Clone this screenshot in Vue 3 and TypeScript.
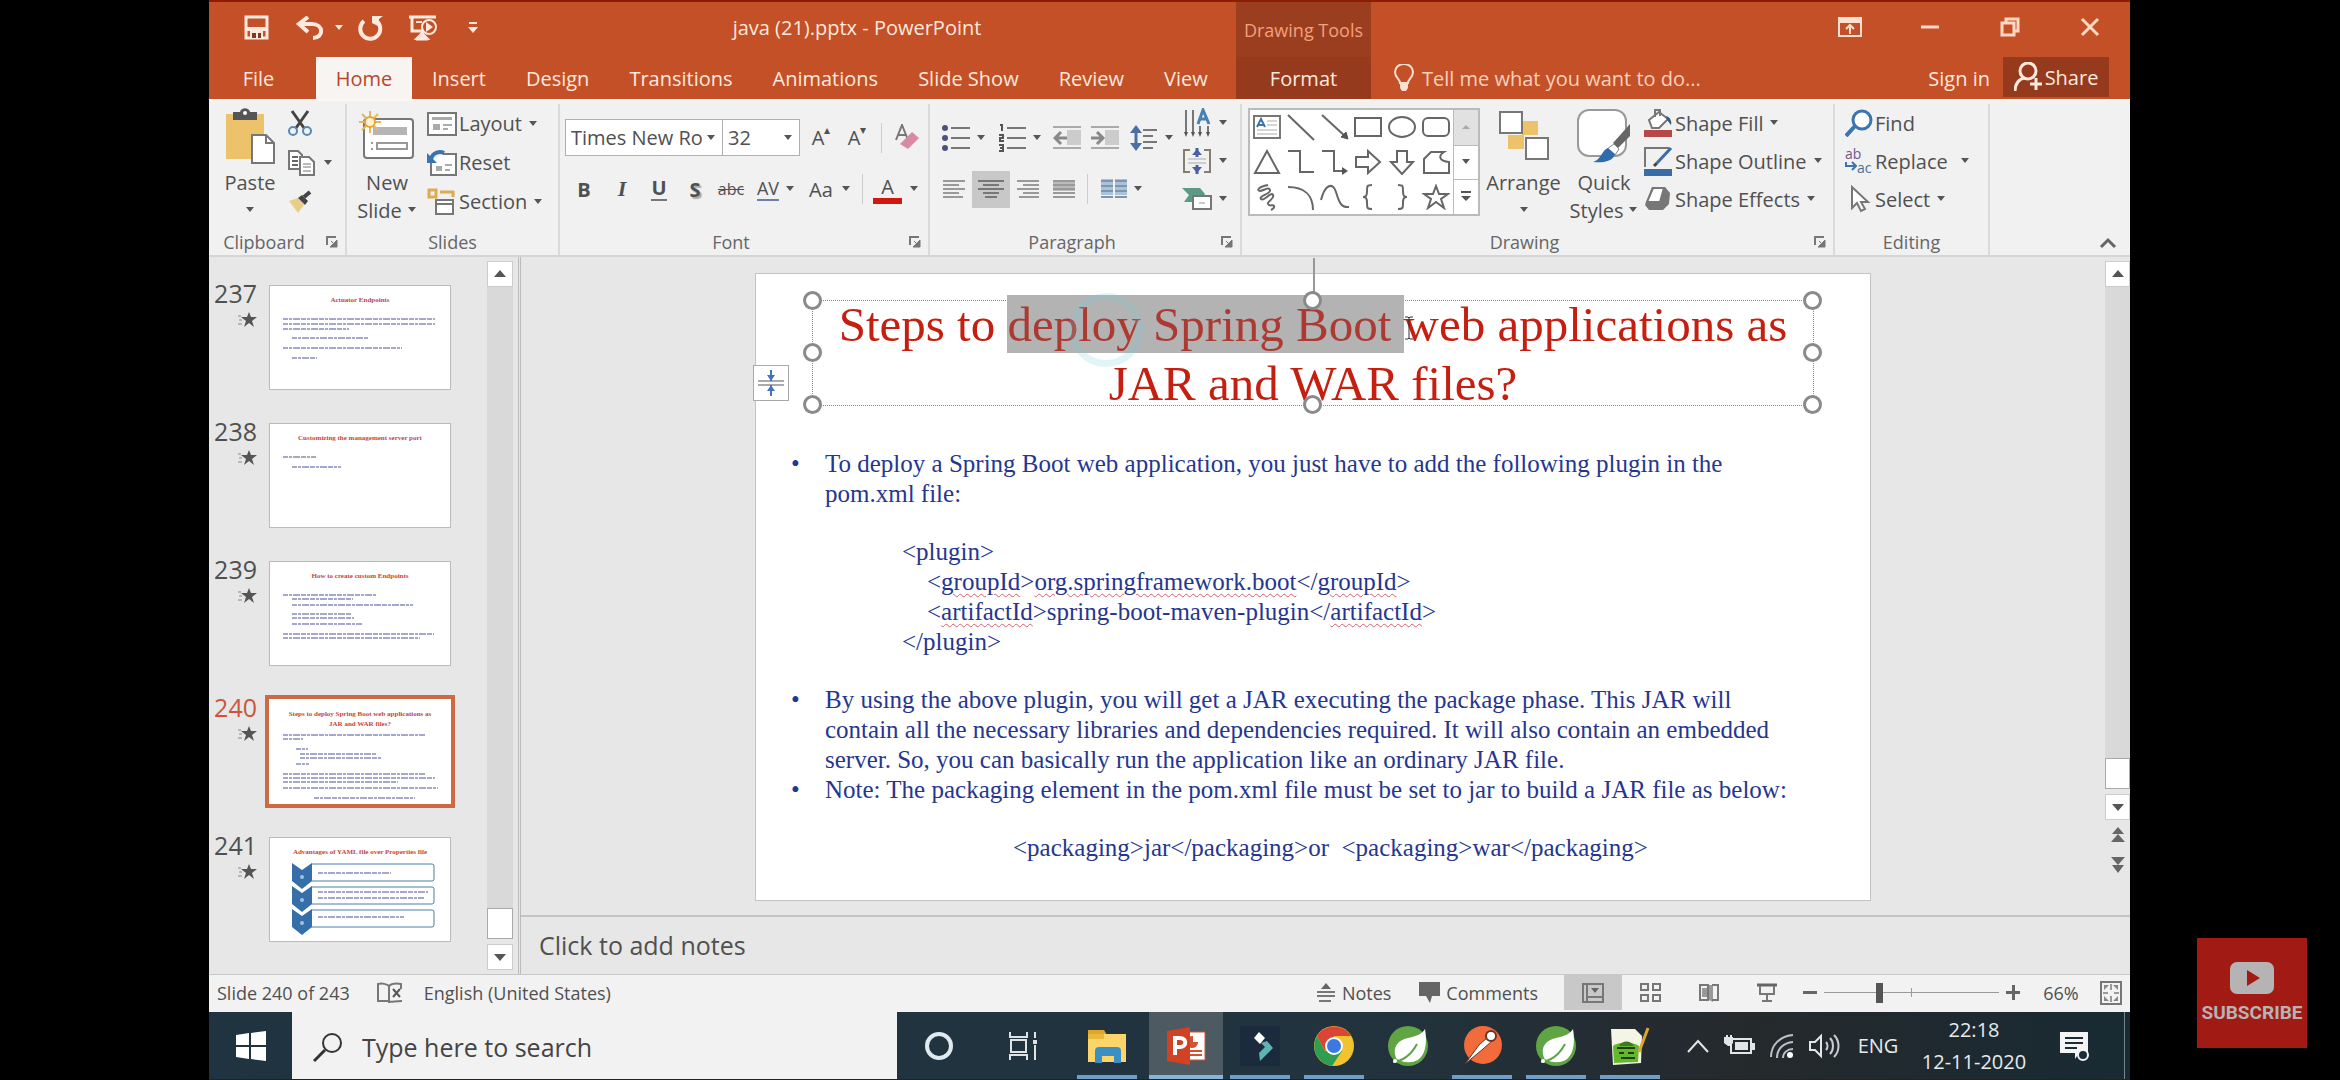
<script setup lang="ts">
import { h, ref } from 'vue'

interface Icon { w: number; h: number; b: string }

const g = 'fill="none" stroke="#666" stroke-width="2"'
const w = 'fill="none" stroke="#ffe9df" stroke-width="3"'

const leaf = `<circle cx="21" cy="21" r="20" fill="#5fa544"/><path d="M38 4c3 18-1 32-14 33-8 1-13-2-15-4-4-11 2-18 12-20 9-2 14-4 17-9z" fill="#fff"/><path d="M6 37c10-1 18-7 24-18" fill="none" stroke="#5fa544" stroke-width="2"/><circle cx="8" cy="36" r="2" fill="#fff"/>`

const icons: Record<string, Icon> = {
  caret: { w: 10, h: 6, b: '<path d="M1 0h8L5 5z" fill="#555"/>' },
  caretLight: { w: 10, h: 6, b: '<path d="M1 0h8L5 5z" fill="#ffe9df"/>' },
  save: { w: 25, h: 25, b: `<path d="M2 2h21v21H2z" ${w}/><path d="M2 12h21v4H2zM6 15h13v9H6z" fill="#ffe9df"/><path d="M8 18h4v5H8zM14 18h3v5h-3z" fill="#8a3418"/>` },
  undo: { w: 28, h: 24, b: `<path d="M4 8h12c12 0 12 14 1 14" fill="none" stroke="#ffe9df" stroke-width="4"/><path d="M12 1L3 8l9 8" fill="none" stroke="#ffe9df" stroke-width="4"/>` },
  redo: { w: 26, h: 26, b: `<path d="M17 5A10 10 0 1 1 6 6" fill="none" stroke="#ffe9df" stroke-width="4"/><path d="M14 1h11l-4 3-1 7-6-3z" fill="#ffe9df"/>` },
  show: { w: 30, h: 28, b: `<path d="M1 3h27" ${w}/><path d="M4 4v13h16M14 17v6M8 25h12" fill="none" stroke="#ffe9df" stroke-width="3"/><path d="M8 8h6M14 19l-6 6h12z" stroke="#ffe9df" stroke-width="2" fill="#ffe9df"/><circle cx="21" cy="13" r="7" fill="#c44f26" stroke="#ffe9df" stroke-width="2"/><path d="M18 8l7 5-7 5z" fill="#ffe9df"/>` },
  custom: { w: 10, h: 12, b: '<path d="M1 1h8" stroke="#ffe9df" stroke-width="2"/><path d="M0 5h10L5 11z" fill="#ffe9df"/>' },
  ribbonOpts: { w: 24, h: 20, b: '<path d="M1 1h22v18H1z" fill="none" stroke="#ffe0d0" stroke-width="2"/><path d="M1 1h22v5H1z" fill="#ffe0d0"/><path d="M12 17V8M8 12l4-4 4 4" fill="none" stroke="#ffe0d0" stroke-width="2"/>' },
  min: { w: 20, h: 20, b: '<path d="M1 10h18" stroke="#ffd9c6" stroke-width="3"/>' },
  restore: { w: 20, h: 20, b: '<path d="M2 6h12v12H2zM6 5V2h12v12h-3" fill="none" stroke="#ffd9c6" stroke-width="3"/>' },
  close: { w: 20, h: 20, b: '<path d="M2 2l16 16M18 2L2 18" stroke="#ffd9c6" stroke-width="3"/>' },
  bulb: { w: 20, h: 28, b: '<path d="M6 19c0-4-5-5-5-11a9 8 0 0 1 18 0c0 6-5 7-5 11z" fill="none" stroke="#ffe0d0" stroke-width="2"/><path d="M6 20h8v4l-2 3H8l-2-3z" fill="#ffe0d0"/>' },
  person: { w: 28, h: 30, b: '<circle cx="14" cy="9" r="8" fill="none" stroke="#ffe9df" stroke-width="3"/><path d="M1 29c0-7 4-12 9-13M22 16v12M16 22h12" fill="none" stroke="#ffe9df" stroke-width="3"/>' },
  paste: { w: 50, h: 56, b: '<path d="M1 6h38v45H1z" fill="#ecc26b"/><path d="M8 4h7c1-5 9-5 10 0h7v8H8z" fill="#555"/><circle cx="20" cy="5" r="2" fill="#fff"/><path d="M27 27h14l8 8v20H27z" fill="#fff" stroke="#777" stroke-width="2"/><path d="M41 27v8h8" fill="none" stroke="#777" stroke-width="2"/>' },
  cut: { w: 26, h: 28, b: '<path d="M5 1l12 17M21 1L9 18" stroke="#444" stroke-width="3"/><circle cx="6" cy="21" r="4" fill="none" stroke="#5b87b3" stroke-width="2"/><circle cx="20" cy="21" r="4" fill="none" stroke="#5b87b3" stroke-width="2"/>' },
  copy: { w: 28, h: 28, b: `<path d="M2 2h9l4 4v14H2z" fill="#fff" stroke="#777" stroke-width="2"/><path d="M5 8h6M5 12h6M5 16h6" ${g}/><path d="M13 8h9l5 5v13H13z" fill="#fff" stroke="#777" stroke-width="2"/><path d="M16 15h8M16 18h8M16 22h8" stroke="#777" fill="none"/>` },
  brush: { w: 26, h: 24, b: '<path d="M2 11l9-3 6 7-6 8z" fill="#e8cf87"/><path d="M11 8l7 7 3-4-6-6z" fill="#444"/><path d="M17 7l6-5" stroke="#444" stroke-width="4"/>' },
  newSlide: { w: 56, h: 50, b: '<rect x="5" y="8" width="49" height="39" rx="3" fill="#fff" stroke="#777" stroke-width="2"/><path d="M14 16h34v8H14z" fill="#b5b5b5"/><path d="M18 32h30v6H18zM12 32h2M12 38h2" fill="none" stroke="#999" stroke-width="2"/><path d="M11 0v22M0 11h22M3 3l16 16M19 3L3 19" stroke="#eab65a" stroke-width="2"/><circle cx="11" cy="11" r="5" fill="#fff4d0" stroke="#e3a53e" stroke-width="2"/>' },
  layout: { w: 30, h: 24, b: '<path d="M1 1h28v22H1z" fill="#fff" stroke="#777" stroke-width="2"/><path d="M5 5h20v3H5zM6 12h7v6H6zM16 12h9v2h-9zM16 16h5v2h-5z" fill="#aaa"/>' },
  reset: { w: 30, h: 26, b: '<path d="M4 12v13h25V4H16" fill="#fff" stroke="#777" stroke-width="2"/><path d="M9 16h6v5H9zM18 14h7v2h-7zM18 19h5v2h-5z" fill="#aaa"/><path d="M4 9c2-7 9-8 13-6" fill="none" stroke="#3b74ae" stroke-width="4"/><path d="M0 3v10h10z" fill="#3b74ae"/>' },
  section: { w: 30, h: 28, b: '<path d="M2 2h7v7H2zM13 4h14M26 3v6" fill="none" stroke="#e0aa50" stroke-width="3"/><path d="M9 12h17v14H9z" fill="#fff" stroke="#777" stroke-width="2"/><path d="M9 16h17" stroke="#777" stroke-width="2"/>' },
  launcher: { w: 12, h: 12, b: '<path d="M1 9V1h9" fill="none" stroke="#777" stroke-width="2"/><path d="M5 5l3 3M11 4v7H4z" stroke="#777" fill="#777"/>' },
  eraser: { w: 24, h: 28, b: '<path d="M1 16L7 1l6 15M3 11h8" fill="none" stroke="#777" stroke-width="2"/><path d="M5 20l12-12 7 6-11 11z" fill="#d98aa2"/>' },
  bullets: { w: 28, h: 28, b: '<path d="M9 4h19M9 14h19M9 24h19" stroke="#777" stroke-width="2"/><circle cx="3" cy="4" r="3" fill="#4b5478"/><circle cx="3" cy="14" r="3" fill="#4b5478"/><circle cx="3" cy="24" r="3" fill="#4b5478"/>' },
  numbers: { w: 28, h: 28, b: '<path d="M9 4h19M9 14h19M9 24h19" stroke="#777" stroke-width="2"/><path d="M2 1h2v6M1 11h4v3H2v3h4M1 21h4v6H1M2 24h3" fill="none" stroke="#555" stroke-width="2"/>' },
  outdent: { w: 28, h: 26, b: '<path d="M0 2h28M0 23h28" stroke="#aaa" stroke-width="2"/><path d="M14 5h14v15H14z" fill="#ccc"/><path d="M14 13H3M8 7l-6 6 6 6" fill="none" stroke="#888" stroke-width="3"/>' },
  indent: { w: 28, h: 26, b: '<path d="M0 2h28M0 23h28" stroke="#aaa" stroke-width="2"/><path d="M14 5h14v15H14z" fill="#ccc"/><path d="M0 13h11M6 7l6 6-6 6" fill="none" stroke="#888" stroke-width="3"/>' },
  spacing: { w: 28, h: 28, b: '<path d="M6 4v20" stroke="#4a6fa5" stroke-width="3"/><path d="M0 9l6-8 6 8zM0 19l6 8 6-8z" fill="#4a6fa5"/><path d="M13 6h14M13 12h10M13 18h14M13 24h10" stroke="#777" stroke-width="2"/>' },
  textDir: { w: 30, h: 30, b: '<path d="M4 2v24M11 2v24M18 18v8M26 18v8" stroke="#777" stroke-width="2"/><path d="M2 24h4l-2 5zM9 24h4l-2 5zM16 24h4l-2 5zM24 24h4l-2 5z" fill="#555"/><path d="M16 16L21 2l6 14M17 11h8" fill="none" stroke="#4682b4" stroke-width="3"/>' },
  alignText: { w: 30, h: 26, b: '<path d="M8 2H2v22h6M22 2h6v22h-6" fill="none" stroke="#857e6c" stroke-width="2"/><path d="M6 11h18M6 15h18" stroke="#aaa"/><path d="M15 0v9M15 17v9" stroke="#4a5fa5" stroke-width="3"/><path d="M10 7l5-6 5 6zM10 19l5 6 5-6z" fill="#4a5fa5"/>' },
  smartArt: { w: 30, h: 24, b: '<path d="M0 1h18l5 6-5 8H2l5-7z" fill="#5b9a87"/><path d="M11 9h18v13H11z" fill="#fff" stroke="#777" stroke-width="2"/><path d="M17 16h6" stroke="#999"/>' },
  left: { w: 22, h: 20, b: '<path d="M0 2h22M0 6h16M0 10h22M0 14h16M0 18h20" stroke="#999" stroke-width="2"/>' },
  center: { w: 26, h: 20, b: '<path d="M0 2h26M5 6h16M0 10h26M5 14h16M7 18h12" stroke="#777" stroke-width="2"/>' },
  right: { w: 22, h: 20, b: '<path d="M0 2h22M6 6h16M0 10h22M6 14h16M2 18h20" stroke="#999" stroke-width="2"/>' },
  justify: { w: 22, h: 20, b: '<path d="M0 1h22v11H0z" fill="#bbb"/><path d="M0 2h22M0 6h22M0 10h22M0 14h22M0 18h22" stroke="#999" stroke-width="2"/>' },
  columns: { w: 26, h: 20, b: '<path d="M0 0h12v16H0zM14 0h12v16H14z" fill="#a9c3dd"/><path d="M0 2h12M0 7h12M0 12h12M0 18h12M14 2h12M14 7h12M14 12h12M14 18h12" stroke="#8195aa" stroke-width="2"/>' },
  sText: { w: 28, h: 24, b: '<path d="M1 1h26v22H1z" fill="#fff" stroke="#777" stroke-width="2"/><path d="M4 12l4-8 4 8M5 10h6" fill="none" stroke="#3b74ae" stroke-width="2"/><path d="M14 6h10M14 10h10M4 15h20M4 19h20" stroke="#aaa"/>' },
  sLine: { w: 28, h: 28, b: `<path d="M1 2l26 25" ${g}/>` },
  sArrow: { w: 28, h: 28, b: `<path d="M1 2l24 22" ${g}/><path d="M27 26l-7-2 5-5z" fill="#555" stroke="#555"/>` },
  sRect: { w: 28, h: 24, b: `<path d="M1 3h26v18H1z" ${g}/>` },
  sOval: { w: 28, h: 24, b: `<ellipse cx="14" cy="12" rx="13" ry="10" ${g}/>` },
  sRound: { w: 28, h: 24, b: `<rect x="1" y="3" width="26" height="18" rx="5" ${g}/>` },
  sTri: { w: 28, h: 26, b: `<path d="M14 2l12 22H2z" ${g}/>` },
  sElbow: { w: 28, h: 26, b: `<path d="M1 2h12v21h14" ${g}/>` },
  sElbowA: { w: 28, h: 26, b: `<path d="M1 2h12v20h10" ${g}/><path d="M21 18l6 4-6 4z" fill="#555"/>` },
  sRight: { w: 28, h: 26, b: `<path d="M2 8h12V2l12 11-12 11v-6H2z" ${g}/>` },
  sDown: { w: 28, h: 26, b: `<path d="M9 2h10v11h6L14 25 3 13h6z" ${g}/>` },
  sFree: { w: 28, h: 26, b: `<path d="M2 24V10l7-7h13c-6 4-5 9 5 10v11z" ${g}/>` },
  sScrib: { w: 28, h: 28, b: `<path d="M15 2C4 4 4 8 7 8s9-5 10-1-12 6-9 9 10-8 12-4-6 6-5 9 5 0 6 2-3 4-3 4" ${g}/>` },
  sArc: { w: 28, h: 26, b: `<path d="M1 3c16 0 25 8 25 23" ${g}/>` },
  sCurve: { w: 30, h: 26, b: `<path d="M1 16C5 0 13-2 16 8s5 16 13 15" ${g}/>` },
  sLB: { w: 28, h: 26, b: `<path d="M18 1c-5 0-5 1-5 6s-1 6-4 6c3 0 4 1 4 6s0 6 5 6" ${g}/>` },
  sRB: { w: 28, h: 26, b: `<path d="M10 1c5 0 5 1 5 6s1 6 4 6c-3 0-4 1-4 6s0 6-5 6" ${g}/>` },
  sStar: { w: 28, h: 26, b: `<path d="M14 2l3 8h9l-7 5 3 9-8-6-8 6 3-9-7-5h9z" ${g}/>` },
  more: { w: 10, h: 12, b: '<path d="M0 1h10" stroke="#555" stroke-width="2"/><path d="M0 5h10L5 10z" fill="#555"/>' },
  dash: { w: 10, h: 6, b: '<path d="M1 5h8L5 1z" fill="#aaa"/>' },
  arrange: { w: 52, h: 52, b: '<path d="M24 11h16v14H24zM10 25h16v14H10z" fill="#ecc26b"/><path d="M2 2h22v21H2zM28 28h22v21H28z" fill="#fff" stroke="#777" stroke-width="2"/>' },
  quick: { w: 56, h: 56, b: '<rect x="2" y="2" width="48" height="46" rx="11" fill="#fff" stroke="#999" stroke-width="2"/><path d="M54 16v12L42 40l-5-5z" fill="#666"/><path d="M31 41l7-5 5 5-4 6z" fill="#fff" stroke="#888"/><path d="M17 54c9-3 8-11 15-14l7 6c-2 8-13 9-22 8z" fill="#2f6cab"/>' },
  fill: { w: 30, h: 30, b: '<path d="M1 22h28v7H1z" fill="#b8474a"/><path d="M6 12L16 4l9 7-9 9H9z" fill="#fff" stroke="#777" stroke-width="2"/><path d="M12 9V2h5v6" fill="none" stroke="#777" stroke-width="2"/><path d="M23 8c4 1 6 5 5 9l-4-5z" fill="#2e5c7c"/>' },
  outline: { w: 30, h: 30, b: '<path d="M1 23h28v7H1z" fill="#3a6ca6"/><path d="M26 2H2v19" fill="none" stroke="#777" stroke-width="2"/><path d="M28 2L14 17" stroke="#3a6ca6" stroke-width="3"/><path d="M14 17l-3 3" stroke="#444" stroke-width="3"/>' },
  effects: { w: 30, h: 28, b: '<path d="M9 2h13l5 6-1 11-6 6H6l-4-5z" fill="#777"/><path d="M10 3h11l-4 14H4z" fill="#fff" stroke="#777" stroke-width="2"/>' },
  find: { w: 28, h: 28, b: '<circle cx="17" cy="11" r="9" fill="#fff" stroke="#3b74ae" stroke-width="3"/><path d="M10 17L1 27" stroke="#3b74ae" stroke-width="4"/>' },
  select: { w: 28, h: 28, b: '<path d="M7 2v21l5-5 4 8 4-2-4-7h7z" fill="#fff" stroke="#777" stroke-width="2"/>' },
  replArrow: { w: 12, h: 10, b: '<path d="M1 1v4h9M7 1l4 4-4 4" fill="none" stroke="#3b74ae" stroke-width="2"/>' },
  collapse: { w: 18, h: 12, b: '<path d="M2 10l7-7 7 7" fill="none" stroke="#666" stroke-width="3"/>' },
  up: { w: 14, h: 8, b: '<path d="M7 0l6 7H1z" fill="#555"/>' },
  down: { w: 14, h: 8, b: '<path d="M7 8L1 1h12z" fill="#555"/>' },
  dblUp: { w: 14, h: 16, b: '<path d="M7 0l6 7H1zM7 7l7 8H0z" fill="#666"/>' },
  dblDown: { w: 14, h: 16, b: '<path d="M7 8L0 0h14zM7 16L1 8h12z" fill="#666"/>' },
  anim: { w: 20, h: 16, b: '<path d="M12 0l2 5h6l-5 4 2 6-5-4-5 4 2-6-5-4h6z" fill="#555"/><path d="M1 4h3M2 8h3M1 12h4" stroke="#888"/>' },
  cursor: { w: 10, h: 24, b: '<path d="M1 1h3l1 1 1-1h3M5 2v20M1 23h3l1-1 1 1h3" fill="none" stroke="#333"/>' },
  fit: { w: 28, h: 28, b: '<path d="M1 12h26M1 16h26" stroke="#aaa" stroke-width="2"/><path d="M14 1v11M14 16v11" stroke="#4472c4" stroke-width="2"/><path d="M10 6h8l-4 6zM10 22h8l-4-6z" fill="#4472c4"/>' },
  spell: { w: 28, h: 22, b: '<path d="M12 19H2V2c4-1 9 0 11 2 2-2 6-3 12-2v5M12 19c4 2 5 0 14 0M13 4v17" fill="none" stroke="#777" stroke-width="2"/><path d="M17 7l7 8M24 7l-7 8" stroke="#555" stroke-width="2"/>' },
  notes: { w: 20, h: 20, b: '<path d="M10 0l5 6H5z" fill="#666"/><path d="M1 9h18M1 13h18M3 18h12" stroke="#777" stroke-width="2"/>' },
  comment: { w: 22, h: 22, b: '<path d="M0 0h21v14H13l-2 7-4-7H0z" fill="#666"/>' },
  normal: { w: 22, h: 20, b: '<path d="M1 1h20v18H1zM5 1v18M5 14h16" fill="none" stroke="#777" stroke-width="2"/><path d="M9 5h8l-4 5z" fill="#666"/>' },
  sorter: { w: 22, h: 20, b: '<path d="M1 1h7v6H1zM13 1h7v6h-7zM1 12h7v6H1zM13 12h7v6h-7z" fill="none" stroke="#777" stroke-width="2"/>' },
  reading: { w: 20, h: 20, b: '<path d="M1 2h8v15H1z" fill="none" stroke="#777" stroke-width="2"/><path d="M3 5h5v9H3zM10 2h4v17l-4-2z" fill="#999"/><path d="M13 2h6v15h-6" fill="none" stroke="#777" stroke-width="2"/>' },
  slideshow: { w: 20, h: 20, b: '<path d="M0 2h20" stroke="#666" stroke-width="3"/><path d="M3 3v8h14V3M10 11v6M5 18h10" fill="none" stroke="#777" stroke-width="2"/>' },
  fitWin: { w: 22, h: 24, b: '<path d="M1 1h20v22H1z" fill="none" stroke="#777" stroke-width="2"/><path d="M11 3v6M11 15v6M3 12h5M14 12h5" stroke="#999" stroke-width="2"/><path d="M4 4h5l-5 5zM18 4h-5l5 5zM4 20h5l-5-5zM18 20h-5l5-5z" fill="#888"/>' },
  windows: { w: 32, h: 32, b: '<path d="M1 5l13-2v12H1zM16 3l15-2v14H16zM1 17h13v12L1 27zM16 17h15v14l-15-2z" fill="#fff"/>' },
  search: { w: 30, h: 30, b: '<circle cx="19" cy="11" r="9" fill="none" stroke="#333" stroke-width="2"/><path d="M12 18L1 29" stroke="#333" stroke-width="3"/>' },
  cortana: { w: 30, h: 30, b: '<circle cx="15" cy="15" r="12" fill="none" stroke="#dfe9f0" stroke-width="4"/>' },
  taskview: { w: 30, h: 30, b: '<path d="M2 1v5h17V1M2 29v-5h17v5M3 9h15v12H3z" fill="none" stroke="#dfe3e6" stroke-width="2"/><path d="M27 1v6M27 14v15" stroke="#dfe3e6" stroke-width="2"/><path d="M25 9h4v4h-4z" fill="#dfe3e6"/>' },
  folder: { w: 40, h: 34, b: '<path d="M1 1h16l3 5H1z" fill="#e0a526"/><path d="M1 5h38v28H1z" fill="#fcd56a"/><path d="M1 5h16v5H1z" fill="#e9b93c"/><path d="M8 34V22q0-4 4-4h18q4 0 4 4v12h-7v-7H15v7z" fill="#3c8fc4"/>' },
  ppt: { w: 40, h: 38, b: '<path d="M18 5h21v28H18z" fill="#fff" stroke="#d35230"/><path d="M26 10a5 5 0 1 0 5 6h-5zM24 24h12M24 28h12" fill="#d35230" stroke="#d35230" stroke-width="2"/><path d="M1 4l23-4v38L1 34z" fill="#d04223"/><path d="M9 28V11h5c7 0 7 9 0 9h-4" fill="none" stroke="#fff" stroke-width="4"/>' },
  filmora: { w: 40, h: 40, b: '<path d="M0 0h40v40H0z" fill="#1b2a3d"/><path d="M19 6l6 6-5 6-6-6z" fill="#fff"/><path d="M27 15l6 7-13 13-1-8 6-6-4-4z" fill="#5fb3b5"/>' },
  chrome: { w: 42, h: 42, b: '<circle cx="21" cy="21" r="20" fill="#f2c330"/><path d="M4 11a20 20 0 0 1 34 0H21L12 26z" fill="#dc4536"/><path d="M4 11a20 20 0 0 0 15 30l10-15H12z" fill="#2f9e52"/><path d="M12 26h17l-8 5z" fill="#2f9e52"/><circle cx="21" cy="21" r="9" fill="#fff"/><circle cx="21" cy="21" r="7" fill="#3b78e0"/>' },
  spring: { w: 42, h: 42, b: leaf },
  postman: { w: 42, h: 42, b: '<circle cx="22" cy="20" r="19" fill="#f26b3a"/><path d="M4 39l14-19 9-8 4 4-9 8z" fill="#fff" stroke="#6b3322"/><circle cx="30" cy="11" r="5" fill="#fff" stroke="#6b3322" stroke-width="2"/>' },
  npp: { w: 42, h: 40, b: '<path d="M2 3h24l7 7-1 27-28 2z" fill="#f5f5e6"/><path d="M4 20c8-5 20-4 26 0l-1 16-24 1z" fill="#63b82c"/><path d="M10 20c3-6 12-6 15 0z" fill="#3d7a1e"/><path d="M8 22h18M10 27h5M19 27h6M12 32h14" stroke="#223a18" stroke-width="2"/><path d="M39 2L30 26" stroke="#e0a72e" stroke-width="3"/>' },
  chevUp: { w: 24, h: 16, b: '<path d="M2 14L12 3l10 11" fill="none" stroke="#e3e6e8" stroke-width="2"/>' },
  battery: { w: 32, h: 22, b: '<path d="M7 4h20v14H7z" fill="none" stroke="#e3e6e8" stroke-width="2"/><path d="M11 7h13v8H11zM28 8h3v7h-3zM0 2h9v6l-3 3H4L0 8z" fill="#e3e6e8"/><path d="M3 0v3M7 0v3" stroke="#e3e6e8" stroke-width="2"/>' },
  wifi: { w: 26, h: 26, b: '<path d="M2 24C2 12 11 3 24 2M8 25c0-9 6-15 16-16M14 25c0-5 4-9 10-9" fill="none" stroke="#b9c1c7" stroke-width="2"/><circle cx="21" cy="22" r="3" fill="#fff"/>' },
  sound: { w: 32, h: 26, b: '<path d="M2 9h5l6-6v20l-6-6H2z" fill="none" stroke="#e3e6e8" stroke-width="2"/><path d="M18 9c2 2 2 6 0 8M22 5c4 4 4 12 0 16M26 2c6 6 6 16 0 22" fill="none" stroke="#c9ced2" stroke-width="2"/>' },
  notif: { w: 32, h: 30, b: '<path d="M1 1h28v21h-9l-4 6v-6H1z" fill="#f2f4f5"/><path d="M6 7h18M6 12h18M6 17h12" stroke="#1c2a33" stroke-width="2"/><circle cx="24" cy="24" r="5" fill="#1c2a33" stroke="#f2f4f5" stroke-width="2"/>' },
  youtube: { w: 46, h: 32, b: '<rect x="1" y="0" width="44" height="32" rx="7" fill="#b5b3b3"/><path d="M18 8l13 8-13 8z" fill="#a11a13"/>' },
}

const Ico = (p: { n: string }) => {
  const i = icons[p.n]
  return h('svg', { class: 'ico', width: i.w, height: i.h, viewBox: `0 0 ${i.w} ${i.h}`, innerHTML: i.b, 'aria-hidden': 'true' })
}
Ico.props = ['n']

const tabs = ['Insert', 'Design', 'Transitions', 'Animations', 'Slide Show', 'Review', 'View']
const shapes = ['sText', 'sLine', 'sArrow', 'sRect', 'sOval', 'sRound', 'sTri', 'sElbow', 'sElbowA', 'sRight', 'sDown', 'sFree', 'sScrib', 'sArc', 'sCurve', 'sLB', 'sRB', 'sStar']

interface Thumb { no: number; title: string[]; lines: number[][]; art?: boolean }
const thumbs: Thumb[] = [
  { no: 237, title: ['Actuator Endpoints'], lines: [[13, 165, 33], [13, 165, 38], [13, 79, 43], [22, 98, 52], [13, 132, 62], [22, 47, 72]] },
  { no: 238, title: ['Customizing the management server port'], lines: [[13, 46, 33], [22, 71, 43]] },
  { no: 239, title: ['How to create custom Endpoints'], lines: [[13, 106, 33], [22, 83, 37], [22, 143, 43], [22, 82, 52], [22, 84, 56], [22, 92, 62], [13, 164, 72], [13, 150, 76]] },
  { no: 240, title: ['Steps to deploy Spring Boot web applications as', 'JAR and WAR files?'], lines: [[13, 155, 35], [13, 33, 39], [26, 38, 49], [30, 106, 54], [30, 111, 58], [26, 39, 64], [13, 155, 74], [13, 165, 78], [13, 128, 82], [13, 168, 88], [44, 145, 98]] },
  { no: 241, title: ['Advantages of YAML file over Properties file'], lines: [[48, 121, 35], [48, 158, 54], [48, 154, 60], [48, 134, 79]], art: true },
]
const current = 240

const apps = [
  { n: 'ppt', open: true, active: true, label: 'PowerPoint' },
  { n: 'filmora', open: true, label: 'Filmora' },
  { n: 'chrome', open: true, label: 'Chrome' },
  { n: 'spring', open: false, label: 'Spring Tool Suite' },
  { n: 'postman', open: true, label: 'Postman' },
  { n: 'spring', open: true, label: 'Spring Tool Suite workspace' },
  { n: 'npp', open: true, label: 'Notepad++' },
]
const tray = ['chevUp', 'battery', 'wifi', 'sound']

const fontName = ref('Times New Roman')
const fontSize = ref('32')
const zoom = ref(31)
const query = ref('')
</script>

<template>
  <div class="screen">
    <div class="app">
      <header class="head">
        <div class="titlebar">
          <button aria-label="Save" class="q1"><Ico n="save" /></button>
          <button aria-label="Undo" class="q2"><Ico n="undo" /><Ico n="caretLight" /></button>
          <button aria-label="Repeat" class="q3"><Ico n="redo" /></button>
          <button aria-label="Start from beginning" class="q4"><Ico n="show" /></button>
          <button aria-label="Customize toolbar"><Ico n="custom" /></button>
          <h1>java (21).pptx - PowerPoint</h1>
        </div>
        <div class="tools">Drawing Tools</div>
        <div class="winbtns">
          <button aria-label="Ribbon display options"><Ico n="ribbonOpts" /></button>
          <button aria-label="Minimize"><Ico n="min" /></button>
          <button aria-label="Restore"><Ico n="restore" /></button>
          <button aria-label="Close"><Ico n="close" /></button>
        </div>
        <nav class="tabs">
          <button class="file">File</button>
          <button class="home">Home</button>
          <button v-for="t in tabs" :key="t">{{ t }}</button>
        </nav>
        <button class="format">Format</button>
        <div class="tell">
          <button class="tellme"><Ico n="bulb" />Tell me what you want to do...</button>
          <a href="#" class="signin">Sign in</a>
          <button class="share"><Ico n="person" />Share</button>
        </div>
      </header>

      <div class="ribbon">
        <section class="group clip">
          <div class="body">
            <button class="big paste"><span class="pic"><Ico n="paste" /></span><span>Paste</span><span><Ico n="caret" /></span></button>
            <div class="rows wide">
              <button aria-label="Cut"><Ico n="cut" /></button>
              <button aria-label="Copy" class="gap12"><Ico n="copy" /><Ico n="caret" /></button>
              <button aria-label="Format Painter"><Ico n="brush" /></button>
            </div>
          </div>
          <footer><span>Clipboard</span><button aria-label="Clipboard options"><Ico n="launcher" /></button></footer>
        </section>

        <section class="group slides">
          <div class="body">
            <button class="big newslide"><span class="pic"><Ico n="newSlide" /></span><span>New</span><span>Slide <Ico n="caret" /></span></button>
            <div class="rows wide">
              <button><Ico n="layout" />Layout <Ico n="caret" class="car" /></button>
              <button><Ico n="reset" />Reset</button>
              <button><Ico n="section" />Section <Ico n="caret" class="car" /></button>
            </div>
          </div>
          <footer><span>Slides</span></footer>
        </section>

        <section class="group font">
          <div class="body col">
            <div class="line first">
              <div class="combo name"><input v-model="fontName" aria-label="Font name"><Ico n="caret" /></div>
              <div class="combo size"><input v-model="fontSize" aria-label="Font size"><Ico n="caret" /></div>
              <button class="grow" aria-label="Increase font size">A<sup>▴</sup></button>
              <button class="grow" aria-label="Decrease font size">A<sup>▾</sup></button>
              <i class="sep"></i>
              <button aria-label="Clear formatting"><Ico n="eraser" /></button>
            </div>
            <div class="line fmt">
              <button class="c38"><b>B</b></button>
              <button class="c38 ital"><b>I</b></button>
              <button class="c36"><b class="und">U</b></button>
              <button class="c36"><b class="shadow">S</b></button>
              <button class="strike">abc</button>
              <button class="av"><span>AV</span><Ico n="caret" /></button>
              <button class="aa">Aa<Ico n="caret" /></button>
              <i class="sep"></i>
              <button class="color"><span>A</span><Ico n="caret" /></button>
            </div>
          </div>
          <footer><span>Font</span><button aria-label="Font options"><Ico n="launcher" /></button></footer>
        </section>

        <section class="group para">
          <div class="body">
            <div class="pcol">
              <div class="line first">
                <button class="c56" aria-label="Bullets"><Ico n="bullets" /><Ico n="caret" /></button>
                <button class="c56" aria-label="Numbering"><Ico n="numbers" /><Ico n="caret" /></button>
                <button class="c38" aria-label="Decrease indent"><Ico n="outdent" /></button>
                <button class="c38" aria-label="Increase indent"><Ico n="indent" /></button>
                <button class="c56" aria-label="Line spacing"><Ico n="spacing" /><Ico n="caret" /></button>
              </div>
              <div class="line al">
                <button class="c36" aria-label="Align left"><Ico n="left" /></button>
                <button class="c38 on" aria-label="Center"><Ico n="center" /></button>
                <button class="c36" aria-label="Align right"><Ico n="right" /></button>
                <button class="c36" aria-label="Justify"><Ico n="justify" /></button>
                <i class="sep"></i>
                <button class="c56" aria-label="Columns"><Ico n="columns" /><Ico n="caret" /></button>
              </div>
            </div>
            <div class="rows">
              <button aria-label="Text direction"><Ico n="textDir" /><Ico n="caret" class="car" /></button>
              <button aria-label="Align text"><Ico n="alignText" /><Ico n="caret" class="car" /></button>
              <button aria-label="Convert to SmartArt"><Ico n="smartArt" /><Ico n="caret" class="car" /></button>
            </div>
          </div>
          <footer><span>Paragraph</span><button aria-label="Paragraph options"><Ico n="launcher" /></button></footer>
        </section>

        <section class="group draw">
          <div class="body">
            <div class="gallery">
              <div class="shapes">
                <button v-for="s in shapes" :key="s" :aria-label="s.slice(1)"><Ico :n="s" /></button>
              </div>
              <div class="gscroll">
                <button aria-label="Previous shapes" disabled><Ico n="dash" /></button>
                <button aria-label="Next shapes"><Ico n="caret" /></button>
                <button aria-label="More shapes"><Ico n="more" /></button>
              </div>
            </div>
            <button class="big arrange"><span class="pic"><Ico n="arrange" /></span><span>Arrange</span><span><Ico n="caret" /></span></button>
            <button class="big quick"><span class="pic"><Ico n="quick" /></span><span>Quick</span><span>Styles <Ico n="caret" /></span></button>
            <div class="rows">
              <button><Ico n="fill" />Shape Fill <Ico n="caret" class="car" /></button>
              <button><Ico n="outline" />Shape Outline <Ico n="caret" class="car" /></button>
              <button><Ico n="effects" />Shape Effects <Ico n="caret" class="car" /></button>
            </div>
          </div>
          <footer><span>Drawing</span><button aria-label="Drawing options"><Ico n="launcher" /></button></footer>
        </section>

        <section class="group edit">
          <div class="body">
            <div class="rows">
              <button><Ico n="find" />Find</button>
              <button><span class="repl"><span>ab</span><span class="ac"><Ico n="replArrow" />ac</span></span>Replace <Ico n="caret" class="far" /></button>
              <button><Ico n="select" />Select <Ico n="caret" class="car" /></button>
            </div>
          </div>
          <footer><span>Editing</span></footer>
        </section>
        <button class="collapse" aria-label="Collapse the ribbon"><Ico n="collapse" /></button>
      </div>

      <main class="work">
        <aside class="pane">
          <ol class="thumbs">
            <li v-for="t in thumbs" :key="t.no" :class="{ cur: t.no === current }">
              <div class="num"><span>{{ t.no }}</span><Ico n="anim" /></div>
              <div class="thumb">
                <p><span v-for="l in t.title" :key="l">{{ l }}</span></p>
                <svg viewBox="0 0 180 103" width="180" height="103" aria-hidden="true">
                  <template v-if="t.art">
                    <rect v-for="y in [26, 49, 72]" :key="y" x="40" :y="y" width="124" height="17" rx="2" fill="#fff" stroke="#4a7fa8" />
                    <path v-for="y in [26, 49, 72]" :key="'c' + y" :d="`M22 ${y - 1}l10 7 10-7v18l-10 8-10-8z`" fill="#356ea9" />
                    <circle v-for="y in [39, 62, 85]" :key="'d' + y" cx="32" :cy="y" r="2" fill="#9cc3ea" />
                  </template>
                  <line v-for="(l, k) in t.lines" :key="k" :x1="l[0]" :x2="l[1]" :y1="l[2]" :y2="l[2]" class="scribble" />
                </svg>
              </div>
            </li>
          </ol>
          <div class="vscroll">
            <button aria-label="Scroll up"><Ico n="up" /></button>
            <span class="track"></span>
            <span class="grip"></span>
            <button aria-label="Scroll down"><Ico n="down" /></button>
          </div>
        </aside>

        <div class="editor">
          <div class="stagewrap">
            <div class="stage">
              <article class="slide">
                <div class="titlebox">
                  <h2>Steps to <mark>deploy Spring Boot </mark>web applications as<br>JAR and WAR files?</h2>
                  <i class="rot"></i>
                  <i class="hd tl"></i><i class="hd tc"></i><i class="hd tr"></i>
                  <i class="hd ml"></i><i class="hd mr"></i>
                  <i class="hd bl"></i><i class="hd bc"></i><i class="hd br"></i>
                  <i class="busy"></i>
                  <span class="ibeam"><Ico n="cursor" /></span>
                </div>
                <button class="fitbtn" aria-label="AutoFit options"><Ico n="fit" /></button>
                <div class="copytext">
                  <p class="bul">To deploy a Spring Boot web application, you just have to add the following plugin in the<br>pom.xml file:</p>
                  <div class="code">
                    <div>&lt;plugin&gt;</div>
                    <div class="in">&lt;<u>groupId</u>&gt;<u>org.springframework.boot</u>&lt;/<u>groupId</u>&gt;</div>
                    <div class="in">&lt;<u>artifactId</u>&gt;spring-boot-maven-plugin&lt;/<u>artifactId</u>&gt;</div>
                    <div>&lt;/plugin&gt;</div>
                  </div>
                  <p class="bul">By using the above plugin, you will get a JAR executing the package phase. This JAR will<br>contain all the necessary libraries and dependencies required. It will also contain an embedded<br>server. So, you can basically run the application like an ordinary JAR file.</p>
                  <p class="bul">Note: The packaging element in the pom.xml file must be set to jar to build a JAR file as below:</p>
                  <pre class="pack">&lt;packaging&gt;jar&lt;/packaging&gt;or  &lt;packaging&gt;war&lt;/packaging&gt;</pre>
                </div>
              </article>
            </div>
            <div class="vscroll main">
              <button aria-label="Scroll slide up"><Ico n="up" /></button>
              <span class="track"></span>
              <span class="grip"></span>
              <button aria-label="Scroll slide down"><Ico n="down" /></button>
              <button class="bare" aria-label="Previous slide"><Ico n="dblUp" /></button>
              <button class="bare" aria-label="Next slide"><Ico n="dblDown" /></button>
            </div>
          </div>
          <div class="notespane">Click to add notes</div>
        </div>
      </main>

      <footer class="status">
        <span class="count">Slide 240 of 243</span>
        <button aria-label="Spelling"><Ico n="spell" /></button>
        <button class="lang">English (United States)</button>
        <span class="space"></span>
        <button class="note"><Ico n="notes" />Notes</button>
        <button class="comm"><Ico n="comment" />Comments</button>
        <button class="view on" aria-label="Normal"><Ico n="normal" /></button>
        <button class="view" aria-label="Slide sorter"><Ico n="sorter" /></button>
        <button class="view" aria-label="Reading view"><Ico n="reading" /></button>
        <button class="view" aria-label="Slide show"><Ico n="slideshow" /></button>
        <button class="pm" aria-label="Zoom out"><i></i></button>
        <input v-model="zoom" class="zoom" type="range" min="0" max="100" aria-label="Zoom">
        <button class="pm plus" aria-label="Zoom in"><i></i></button>
        <button class="pct">66%</button>
        <button class="fitw" aria-label="Fit slide to window"><Ico n="fitWin" /></button>
      </footer>

      <div class="taskbar">
        <button class="start" aria-label="Start"><Ico n="windows" /></button>
        <label class="searchbox"><Ico n="search" /><input v-model="query" type="text" placeholder="Type here to search" aria-label="Search"></label>
        <button class="sys" aria-label="Cortana"><Ico n="cortana" /></button>
        <button class="sys" aria-label="Task view"><Ico n="taskview" /></button>
        <button class="sys open" aria-label="File Explorer"><Ico n="folder" /></button>
        <button v-for="a in apps" :key="a.label" class="task" :class="{ open: a.open, active: a.active }" :aria-label="a.label"><Ico :n="a.n" /></button>
        <div class="tray">
          <button v-for="t in tray" :key="t" class="tico" :aria-label="t"><Ico :n="t" /></button>
          <button class="eng">ENG</button>
          <button class="clock"><span>22:18</span><span>12-11-2020</span></button>
          <button class="bell" aria-label="Notifications"><Ico n="notif" /></button>
          <button class="peek" aria-label="Show desktop"></button>
        </div>
      </div>
    </div>
    <button class="subscribe"><Ico n="youtube" /><span>SUBSCRIBE</span></button>
  </div>
</template>

<style>
html,
body {
  margin: 0;
  background: #000;
}
</style>

<style scoped>
.screen {
  display: grid;
  grid-template-columns: minmax(0, 209fr) minmax(0, 1921fr) minmax(0, 210fr);
  min-height: 100vh;
  background: #000;
  font-family: "Open Sans", "Noto Sans", sans-serif;
  font-size: 20px;
  color: #505050;
}
.screen * { box-sizing: border-box; }
button,
input {
  font: inherit;
  color: inherit;
  border: 0;
  margin: 0;
  padding: 0;
  background: none;
  border-radius: 0;
}
button {
  display: flex;
  align-items: center;
  justify-content: center;
  white-space: nowrap;
}
.ico { display: block; flex: none; }
.app {
  grid-column: 2;
  display: flex;
  flex-direction: column;
  min-height: 100vh;
  background: #e6e7e6;
  overflow: hidden;
}

/* title bar and tabs */
.head {
  display: grid;
  grid-template-columns: 1027px 135px minmax(0, 1fr);
  grid-template-rows: 55px 42px;
  border-top: 2px solid #8c1d04;
  background: #c35026;
  color: #ffe9df;
}
.titlebar {
  display: flex;
  align-items: center;
  padding: 0 0 4px 35px;
}
.q1 { margin-right: 27px; }
.q2 { gap: 10px; margin-right: 14px; }
.q3 { margin-right: 24px; }
.q4 { margin-right: 30px; }
.titlebar h1 {
  flex: 1;
  margin: 0;
  font-size: 20px;
  font-weight: 400;
  text-align: center;
}
.tools {
  display: flex;
  align-items: center;
  justify-content: center;
  background: #9b3e20;
  color: #f3a07c;
  font-size: 18px;
}
.winbtns {
  display: flex;
  justify-content: flex-end;
  align-items: center;
  padding: 0 0 6px;
}
.winbtns button { width: 80px; }
.tabs { display: flex; }
.tabs button { padding: 0 20px; }
.tabs .file { width: 107px; padding: 0 28px 0 20px; }
.tabs .home {
  width: 96px;
  background: #f8f4f2;
  color: #b5482a;
}
.format { background: #963a1d; }
.tell {
  display: flex;
  align-items: center;
  padding: 0 21px 0 23px;
}
.tellme { gap: 8px; color: #fbd0bd; }
.signin {
  margin-left: auto;
  color: inherit;
  text-decoration: none;
}
.share {
  width: 106px;
  height: 40px;
  margin: 0 0 2px 13px;
  gap: 3px;
  background: #963a1d;
}

/* ribbon */
.ribbon {
  display: flex;
  position: relative;
  padding-top: 3px;
  height: 158px;
  background: #f1f1f1;
  border-top: 2px solid #fbf6f2;
  border-bottom: 2px solid #d5d5d5;
}
.group {
  flex: none;
  border-right: 2px solid #dadada;
}
.body { display: flex; height: 125px; }
.col { flex-direction: column; }
.group footer {
  display: flex;
  align-items: center;
  height: 26px;
  font-size: 18px;
  color: #666;
}
.group footer span { flex: 1; text-align: center; }
.group footer button { width: 26px; }
.clip { width: 138px; }
.slides { width: 213px; }
.font { width: 370px; }
.para { width: 312px; }
.draw { width: 593px; }
.edit { width: 155px; }

.big {
  flex-direction: column;
  justify-content: flex-start;
}
.big > span {
  display: flex;
  align-items: center;
  justify-content: center;
  gap: 5px;
  height: 28px;
}
.big > .pic { height: 64px; }
.paste { width: 78px; padding-left: 4px; }
.newslide { width: 80px; }
.arrange { width: 87px; }
.quick { width: 74px; }
.rows { display: flex; flex-direction: column; }
.rows button {
  height: 38px;
  justify-content: flex-start;
  gap: 2px;
}
.rows.wide button { height: 39px; }
.rows .gap12 { gap: 8px; }
.rows .car { margin-left: 4px; }
.rows .far { margin-left: 10px; }
.draw .rows { margin-left: 2px; }
.edit .rows { margin-left: 10px; }

.line { display: flex; align-items: center; }
.line.first { height: 37px; margin-top: 15px; }
.fmt,
.al { height: 38px; margin-top: 14px; }
.font .body { padding-left: 5px; }
.combo {
  display: flex;
  align-items: center;
  height: 37px;
  padding: 0 6px 0 5px;
  background: #fff;
  border: 1px solid #b0b0b0;
}
.combo input { flex: 1; width: 0; min-width: 0; }
.combo.name { width: 158px; }
.combo.name .ico { margin-left: 4px; }
.combo.size { width: 77px; border-left: 0; }
.grow { width: 36px; font-size: 20px; }
.combo.size + .grow { margin-left: 3px; }
.grow sup { font-size: 12px; line-height: 12px; align-self: flex-start; }
.sep {
  width: 1px;
  height: 30px;
  background: #ccc;
}
.first .sep { margin: 0 13px 0 6px; }
.c36 { width: 36px; }
.c38 { width: 38px; height: 37px; }
.c56 { width: 56px; gap: 6px; }
.ital { font-family: "Liberation Serif", serif; font-style: italic; font-size: 22px; }
.und { border-bottom: 2px solid #777; line-height: 22px; }
.shadow { text-shadow: 2px 2px 1px #aaa; }
.strike { width: 36px; font-size: 16px; text-decoration: line-through; }
.av { width: 54px; gap: 6px; }
.av span {
  font-size: 18px;
  line-height: 22px;
  border-bottom: 2px solid #6b7fa8;
}
.aa { width: 54px; gap: 8px; }
.fmt .sep { margin: 0 10px 0 5px; }
.color { gap: 7px; }
.color span {
  width: 29px;
  line-height: 23px;
  border-bottom: 6px solid #d0180e;
}
.pcol { width: 252px; }
.para .line { padding-left: 6px; }
.on { background: #c8c8c8; }
.al .sep { margin: 0 6px 0 5px; }

.gallery {
  display: flex;
  width: 232px;
  height: 108px;
  margin: 4px 0 0 6px;
  background: #fff;
  border: 2px solid #bbb;
}
.shapes {
  flex: 1;
  display: grid;
  grid-template-columns: repeat(6, 1fr);
  grid-template-rows: repeat(3, 1fr);
}
.gscroll {
  width: 25px;
  display: grid;
  grid-template-rows: repeat(3, 1fr);
  border-left: 1px solid #bbb;
}
.gscroll button + button { border-top: 1px solid #bbb; }
.gscroll button:disabled { background: #e1e1e1; }
.repl {
  display: flex;
  flex-direction: column;
  width: 28px;
  font-size: 14px;
  line-height: 14px;
  color: #6a5a8c;
  text-align: left;
}
.ac { display: flex; color: #4d6f96; }
.collapse { position: absolute; right: 13px; bottom: 6px; }

/* slide list */
.work { flex: 1; display: flex; }
.pane {
  flex: none;
  display: flex;
  width: 312px;
  border-right: 3px double #bbb;
}
.thumbs {
  flex: 1;
  display: flex;
  flex-direction: column;
  gap: 33px;
  margin: 0;
  padding: 28px 0 0;
  list-style: none;
}
.thumbs li { display: flex; gap: 12px; height: 105px; }
.num {
  display: flex;
  flex-direction: column;
  align-items: flex-end;
  width: 48px;
  font-size: 25px;
  line-height: 16px;
  gap: 11px;
}
.cur .num span { color: #c9563a; }
.thumb {
  position: relative;
  width: 182px;
  height: 105px;
  background: #fff;
  border: 1px solid #bbb;
}
.cur .thumb { outline: 4px solid #cc6a45; border-color: #fff; }
.thumb p {
  position: absolute;
  inset: 9px 0 auto;
  margin: 0;
  font: bold 7px/10px "Liberation Serif", serif;
  color: #c5453a;
  text-align: center;
  white-space: nowrap;
}
.thumb p span { display: block; }
.thumb svg { display: block; }
.scribble { stroke: #a6a8cb; stroke-width: 2; stroke-dasharray: 5 1 3 1 7 1; }
.vscroll {
  display: flex;
  flex-direction: column;
  width: 26px;
  margin-right: 5px;
  padding: 4px 0;
}
.vscroll button {
  height: 26px;
  background: #fff;
  border: 1px solid #ccc;
}
.track { flex: 1; background: #d9d9d9; }
.grip {
  height: 31px;
  margin-bottom: 5px;
  background: #fff;
  border: 1px solid #aaa;
}
.vscroll.main { width: 25px; margin: 0; padding-bottom: 35px; }
.vscroll .bare { height: 30px; background: none; border: 0; }

/* editor */
.editor { flex: 1; display: flex; flex-direction: column; min-width: 0; }
.stagewrap { flex: 1; display: flex; }
.stage {
  flex: 1;
  display: flex;
  justify-content: center;
  align-items: flex-start;
  padding: 16px 0 14px;
}
.slide {
  position: relative;
  width: 1116px;
  max-width: calc(100% - 40px);
  min-height: 628px;
  padding: 26px 56px 0;
  background: #fff;
  border: 1px solid #c4c4c4;
}
.titlebox {
  position: relative;
  height: 106px;
  border: 1px dotted #888;
}
.titlebox h2 {
  margin: -6px 0 0;
  font: 400 49px/59px "Liberation Serif", serif;
  color: #c41f10;
  text-align: center;
  white-space: nowrap;
}
mark {
  padding: 2px 0 1px;
  background: #b3b3b3;
  color: #ad3a32;
}
.hd {
  position: absolute;
  width: 19px;
  height: 19px;
  margin: -10px;
  background: #fff;
  border: 3px solid #8a8a8a;
  border-radius: 50%;
}
.tl, .tc, .tr { top: 0; }
.ml, .mr { top: 50%; }
.bl, .bc, .br { top: 100%; }
.tl, .ml, .bl { left: 0; }
.tc, .bc { left: 50%; }
.tr, .mr, .br { left: 100%; }
.rot {
  position: absolute;
  left: 50%;
  top: -43px;
  width: 2px;
  height: 36px;
  background: #999;
}
.busy {
  position: absolute;
  left: 256px;
  top: -8px;
  width: 74px;
  height: 74px;
  border: 7px solid rgba(120, 205, 225, 0.22);
  border-radius: 50%;
}
.ibeam { position: absolute; left: 591px; top: 15px; }
.fitbtn {
  position: absolute;
  left: -3px;
  top: 91px;
  width: 36px;
  height: 36px;
  background: #fff;
  border: 1px solid #aaa;
}
.copytext {
  padding: 43px 0 0 13px;
  font: 25px/30px "Liberation Serif", serif;
  color: #26368f;
}
.copytext p,
.copytext pre { margin: 0; font: inherit; white-space: pre; }
.bul { position: relative; }
.bul::before {
  content: "•";
  position: absolute;
  left: -34px;
}
.copytext .code { margin: 28px 0 28px 77px; white-space: nowrap; }
.copytext .pack { margin: 28px 0 0 188px; }
.in { padding-left: 25px; }
.code u { text-decoration: underline wavy #d8606a 1px; text-underline-offset: 3px; }
.notespane {
  display: flex;
  align-items: center;
  height: 59px;
  padding: 0 0 2px 18px;
  border-top: 2px solid #c4c4c4;
  font-size: 25px;
}

/* status bar */
.status {
  display: flex;
  height: 38px;
  align-items: center;
  padding: 0 3px 2px 8px;
  background: #f2f2f2;
  border-top: 1px solid #c8c8c8;
  font-size: 18px;
}
.status > button { height: 35px; }
.count { margin-right: 26px; }
.lang { margin-left: 20px; }
.space { flex: 1; }
.note { gap: 6px; margin-right: 28px; }
.comm { gap: 5px; margin-right: 26px; }
.view { width: 58px; }
.pm { width: 28px; }
.pm i { position: relative; width: 14px; height: 3px; background: #666; }
.plus i::after {
  content: "";
  position: absolute;
  left: 6px;
  top: -6px;
  width: 3px;
  height: 15px;
  background: #666;
}
.zoom {
  appearance: none;
  width: 175px;
  height: 20px;
  background: linear-gradient(#999, #999) center / 100% 1px no-repeat, linear-gradient(#999, #999) 50% 50% / 1px 9px no-repeat;
}
.zoom::-webkit-slider-thumb {
  appearance: none;
  width: 7px;
  height: 20px;
  background: #555;
}
.pct { width: 68px; }
.fitw { width: 32px; }

/* taskbar */
.taskbar {
  display: flex;
  height: 69px;
  background: linear-gradient(90deg, #1f3340, #22333e 60%, #25292c 80%, #182a33);
  border-bottom: 2px solid #222;
  color: #e8ebed;
}
.start { width: 83px; }
.searchbox {
  display: flex;
  align-items: center;
  gap: 19px;
  flex: 0 1 605px;
  padding: 2px 0 0 21px;
  background: #f2f2f2;
  color: #444;
  font-size: 25px;
}
.searchbox input { flex: 1; min-width: 0; outline: none; }
.searchbox input::placeholder { color: #444; opacity: 1; }
.sys { width: 84px; }
.task { width: 74px; }
.sys,
.task { position: relative; }
.open::after {
  content: "";
  position: absolute;
  bottom: 0;
  left: 50%;
  width: 60px;
  height: 4px;
  margin-left: -30px;
  background: #6f9fc8;
}
.active { background: #4d5a61; }
.active::after { width: 74px; margin-left: -37px; background: #86b5dc; }
.tray { display: flex; margin-left: auto; }
.tico { width: 42px; }
.eng { width: 66px; }
.clock {
  width: 126px;
  flex-direction: column;
  line-height: 32px;
}
.bell { width: 76px; }
.peek { width: 6px; margin-left: 11px; border-left: 1px solid #7b868c; }

.subscribe {
  grid-column: 3;
  align-self: end;
  justify-self: center;
  flex-direction: column;
  gap: 7px;
  width: 110px;
  height: 110px;
  margin: 0 0 33px 34px;
  background: #a11a13;
  color: #b5b3b3;
  font: bold 19px/24px "Roboto", sans-serif;
}
</style>
